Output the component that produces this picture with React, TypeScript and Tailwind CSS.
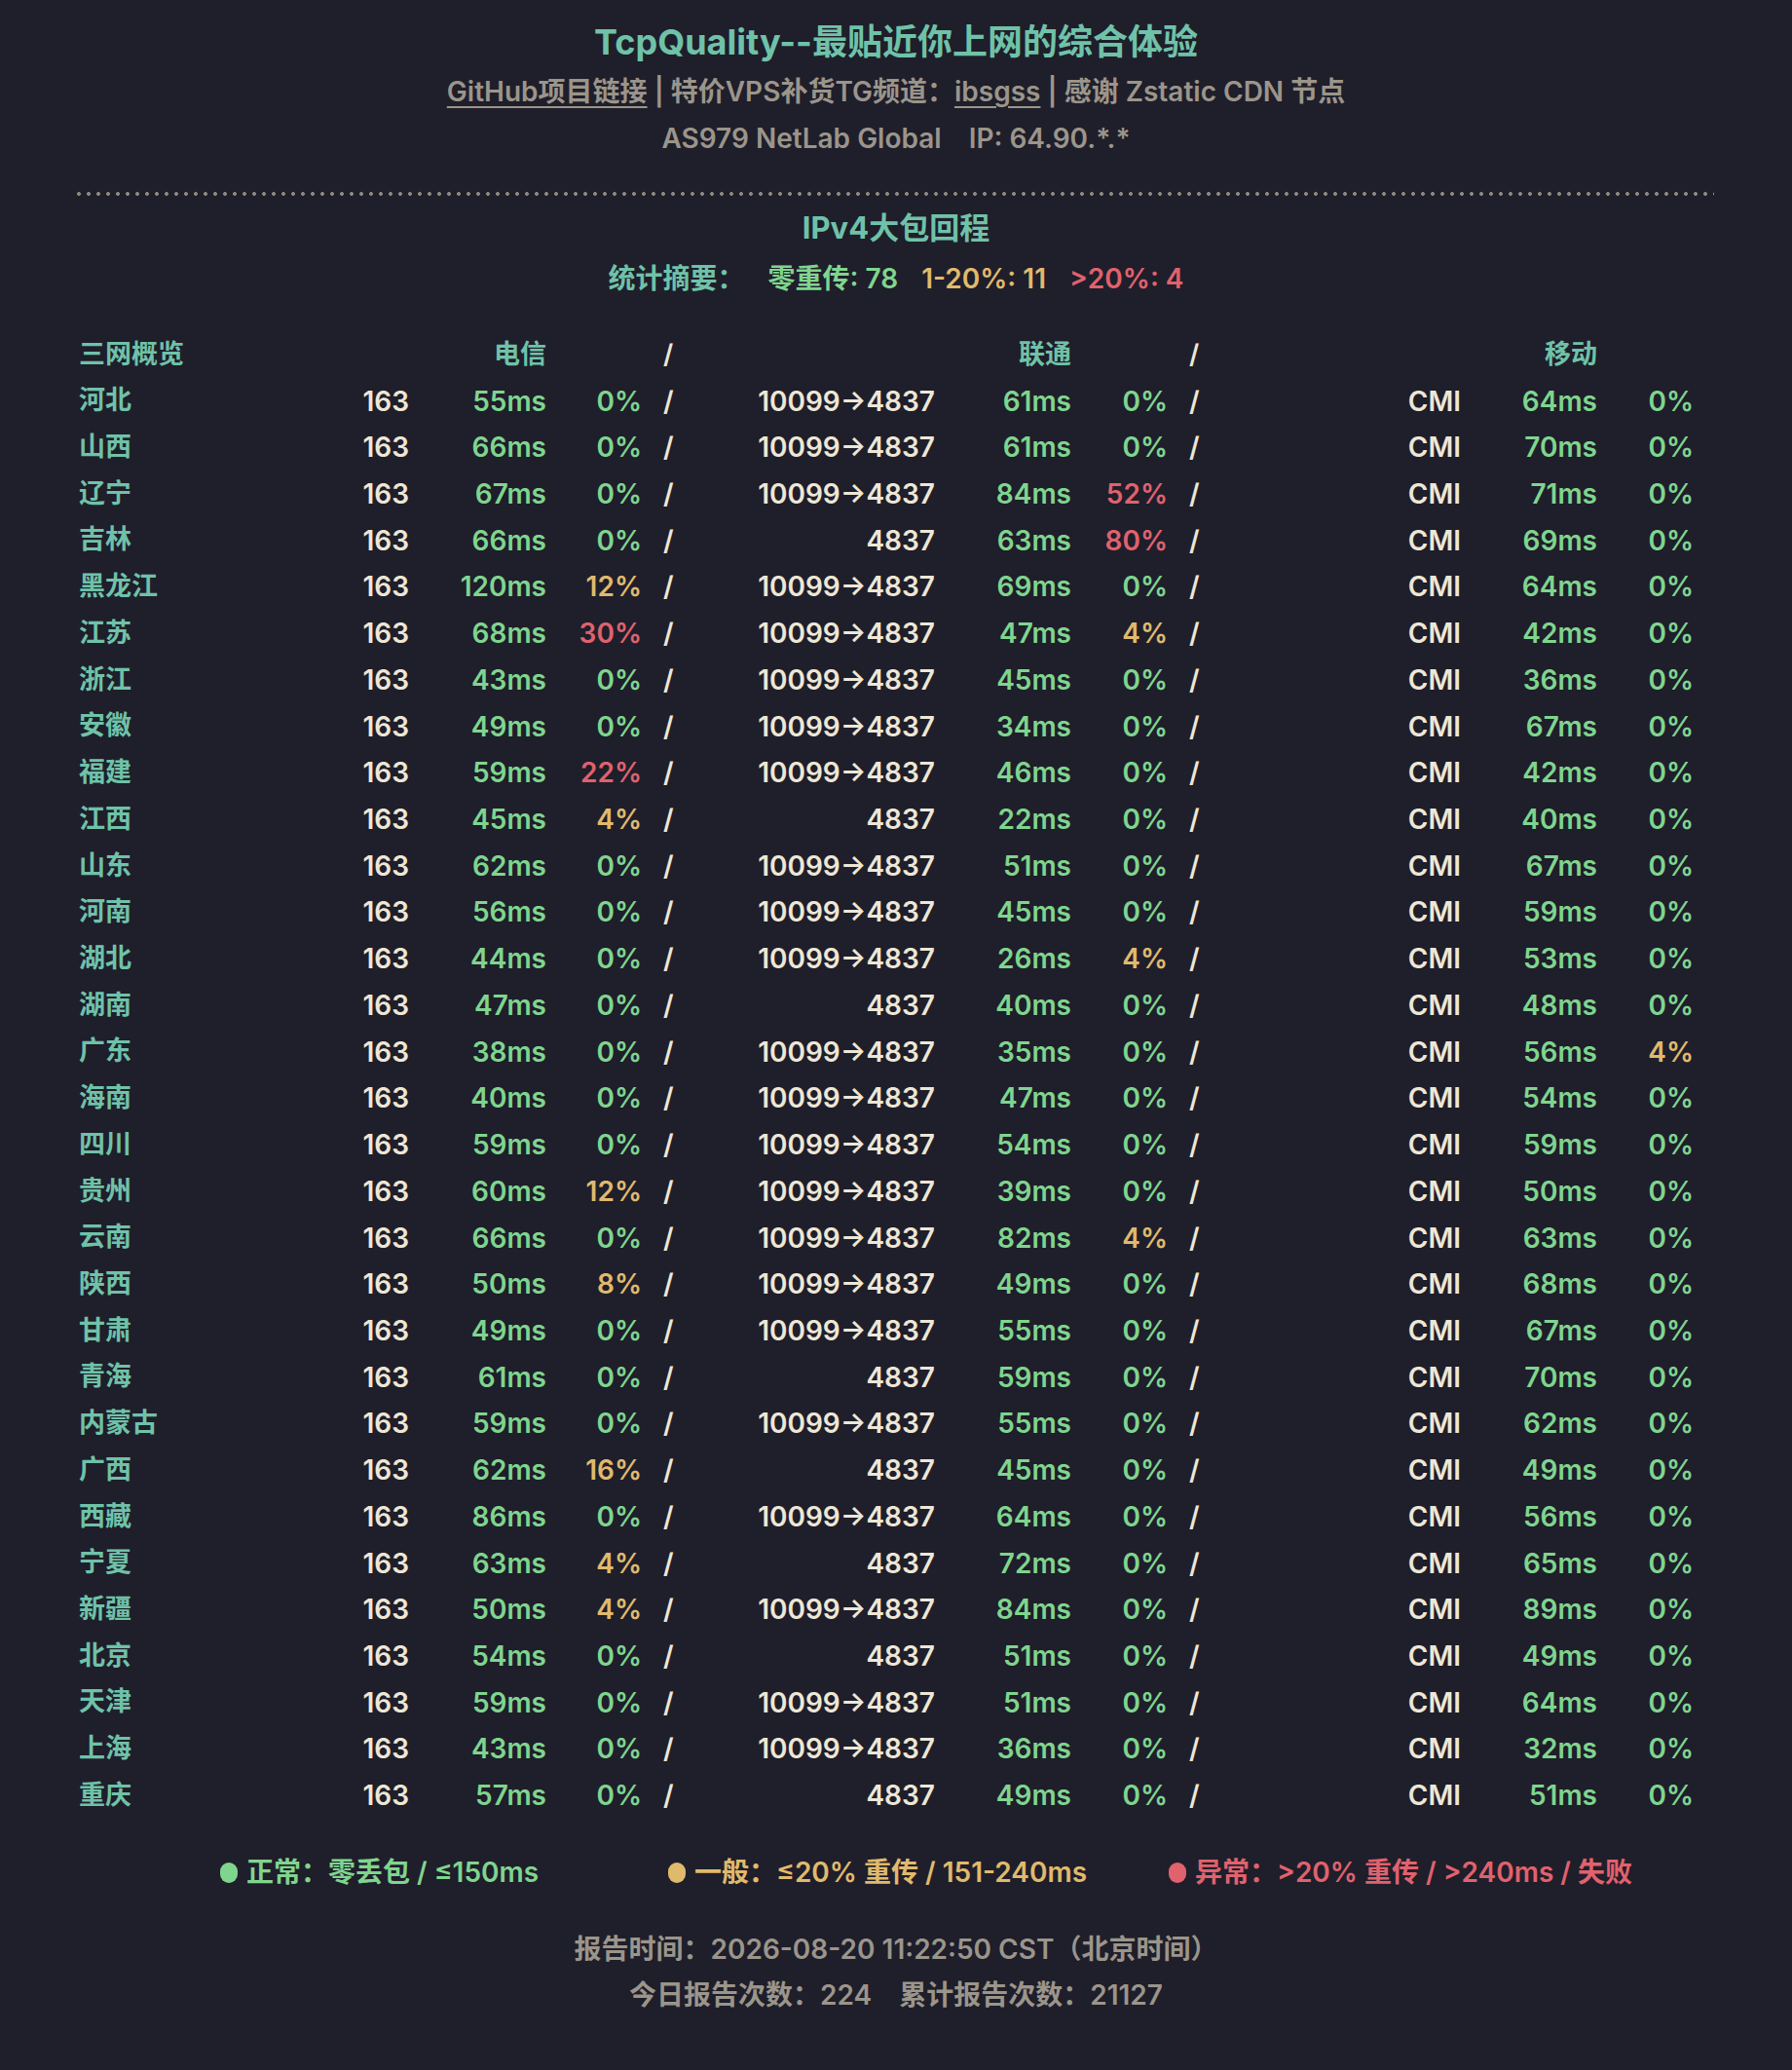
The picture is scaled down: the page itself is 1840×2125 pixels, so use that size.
import React from "react";

// [province, 电信 ms, 电信 loss, 联通 route, 联通 ms, 联通 loss, 移动 ms, 移动 loss]
type Row = [string, number, number, string, number, number, number, number];

const R = "10099→4837";

const rows: Row[] = [
  ["河北", 55, 0, R, 61, 0, 64, 0],
  ["山西", 66, 0, R, 61, 0, 70, 0],
  ["辽宁", 67, 0, R, 84, 52, 71, 0],
  ["吉林", 66, 0, "4837", 63, 80, 69, 0],
  ["黑龙江", 120, 12, R, 69, 0, 64, 0],
  ["江苏", 68, 30, R, 47, 4, 42, 0],
  ["浙江", 43, 0, R, 45, 0, 36, 0],
  ["安徽", 49, 0, R, 34, 0, 67, 0],
  ["福建", 59, 22, R, 46, 0, 42, 0],
  ["江西", 45, 4, "4837", 22, 0, 40, 0],
  ["山东", 62, 0, R, 51, 0, 67, 0],
  ["河南", 56, 0, R, 45, 0, 59, 0],
  ["湖北", 44, 0, R, 26, 4, 53, 0],
  ["湖南", 47, 0, "4837", 40, 0, 48, 0],
  ["广东", 38, 0, R, 35, 0, 56, 4],
  ["海南", 40, 0, R, 47, 0, 54, 0],
  ["四川", 59, 0, R, 54, 0, 59, 0],
  ["贵州", 60, 12, R, 39, 0, 50, 0],
  ["云南", 66, 0, R, 82, 4, 63, 0],
  ["陕西", 50, 8, R, 49, 0, 68, 0],
  ["甘肃", 49, 0, R, 55, 0, 67, 0],
  ["青海", 61, 0, "4837", 59, 0, 70, 0],
  ["内蒙古", 59, 0, R, 55, 0, 62, 0],
  ["广西", 62, 16, "4837", 45, 0, 49, 0],
  ["西藏", 86, 0, R, 64, 0, 56, 0],
  ["宁夏", 63, 4, "4837", 72, 0, 65, 0],
  ["新疆", 50, 4, R, 84, 0, 89, 0],
  ["北京", 54, 0, "4837", 51, 0, 49, 0],
  ["天津", 59, 0, R, 51, 0, 64, 0],
  ["上海", 43, 0, R, 36, 0, 32, 0],
  ["重庆", 57, 0, "4837", 49, 0, 51, 0],
];

const lossColor = (v: number) =>
  v === 0 ? "text-[#7fd58e]" : v <= 20 ? "text-[#e0ba6c]" : "text-[#e0626d]";

const msColor = (v: number) =>
  v <= 150 ? "text-[#7fd58e]" : v <= 240 ? "text-[#e0ba6c]" : "text-[#e0626d]";

const grid =
  "grid grid-cols-[220px_119px_141px_98px_40px_261px_140px_99px_40px_261px_140px_99px] h-[47.73px] items-center";

const App = () => {
  return (
    <div
      className="min-h-screen bg-[#1f1e2b] text-[27px] font-semibold"
      style={{ fontFamily: "Inter, 'Noto Sans CJK SC', sans-serif" }}
    >
      <div className="px-[80px] pt-[18px]">
        {/* Header */}
        <h1 className="h-[50px] flex items-center justify-center text-[36px] font-bold text-[#6fc2a8]">
          TcpQuality--最贴近你上网的综合体验
        </h1>
        <p className="h-[48px] mt-[2px] flex items-center justify-center text-[28px] text-[#9b958a] whitespace-pre">
          <a className="underline decoration-2 underline-offset-[5px]">GitHub项目链接</a>
          <span> | </span>
          <span>特价VPS补货TG频道：</span>
          <a className="underline decoration-2 underline-offset-[5px]">ibsgss</a>
          <span> | </span>
          <span>感谢 Zstatic CDN 节点</span>
        </p>
        <p className="h-[48px] flex items-center justify-center gap-[28px] text-[28px] text-[#9b958a]">
          <span>AS979 NetLab Global</span>
          <span>IP: 64.90.*.*</span>
        </p>

        {/* Divider */}
        <div className="mt-[31px] -ml-[4px] h-[4px] bg-[radial-gradient(circle,#8c877b_1.8px,transparent_2.2px)] bg-[length:10px_4px]" />

        {/* Section */}
        <h2 className="mt-[11px] h-[44px] flex items-center justify-center text-[31px] font-bold text-[#6fc2a8]">
          IPv4大包回程
        </h2>
        <p className="mt-[6px] h-[48px] flex items-center justify-center gap-[24px] text-[28px]">
          <span className="text-[#6fc2a8]">统计摘要：</span>
          <span className="text-[#7fd58e]">零重传: 78</span>
          <span className="text-[#e0ba6c]">1-20%: 11</span>
          <span className="text-[#e0626d]">&gt;20%: 4</span>
        </p>

        {/* Table */}
        <div className="mt-[30px] pl-[1px]">
          <div className={grid}>
            <span className="text-[#6fc2a8]">三网概览</span>
            <span />
            <span className="text-right text-[#6fc2a8]">电信</span>
            <span />
            <span className="pl-[22px] text-[#eee7d5]">/</span>
            <span />
            <span className="text-right text-[#6fc2a8]">联通</span>
            <span />
            <span className="pl-[22px] text-[#eee7d5]">/</span>
            <span />
            <span className="text-right text-[#6fc2a8]">移动</span>
            <span />
          </div>
          {rows.map((r, idx) => (
            <div key={idx} className={grid + " text-[28px]"}>
              <span className="text-[27px] text-[#6fc2a8]">{r[0]}</span>
              <span className="text-right text-[#eee7d5]">163</span>
              <span className={"text-right " + msColor(r[1])}>{r[1]}ms</span>
              <span className={"text-right " + lossColor(r[2])}>{r[2]}%</span>
              <span className="pl-[22px] text-[#eee7d5]">/</span>
              <span className="text-right text-[#eee7d5]">{r[3]}</span>
              <span className={"text-right " + msColor(r[4])}>{r[4]}ms</span>
              <span className={"text-right " + lossColor(r[5])}>{r[5]}%</span>
              <span className="pl-[22px] text-[#eee7d5]">/</span>
              <span className="text-right text-[#eee7d5]">CMI</span>
              <span className={"text-right " + msColor(r[6])}>{r[6]}ms</span>
              <span className={"text-right " + lossColor(r[7])}>{r[7]}%</span>
            </div>
          ))}
        </div>

        {/* Legend */}
        <div className="mt-[31px] h-[48px] flex items-center text-[28px]">
          <div className="ml-[146px] flex items-center gap-[9px] text-[#7fd58e]">
            <span className="w-[18px] h-[21px] rounded-full bg-[#7fd58e]" />
            <span>正常：零丢包 / ≤150ms</span>
          </div>
          <div className="ml-[133px] flex items-center gap-[9px] text-[#e0ba6c]">
            <span className="w-[18px] h-[21px] rounded-full bg-[#e0ba6c]" />
            <span>一般：≤20% 重传 / 151-240ms</span>
          </div>
          <div className="ml-[84px] flex items-center gap-[9px] text-[#e0626d]">
            <span className="w-[18px] h-[21px] rounded-full bg-[#e0626d]" />
            <span>异常：&gt;20% 重传 / &gt;240ms / 失败</span>
          </div>
        </div>

        {/* Footer */}
        <p className="mt-[31px] h-[48px] flex items-center justify-center text-[28px] text-[#9b958a]">
          报告时间：2026-08-20 11:22:50 CST（北京时间）
        </p>
        <p className="-mt-[1px] h-[47px] flex items-center justify-center gap-[28px] text-[28px] text-[#9b958a]">
          <span>今日报告次数：224</span>
          <span>累计报告次数：21127</span>
        </p>
      </div>
    </div>
  );
};

export default App;
